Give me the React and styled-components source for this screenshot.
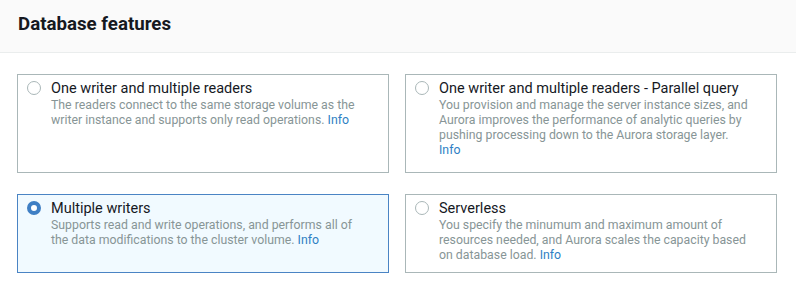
import React, { useState } from 'react';
import styled, { createGlobalStyle } from 'styled-components';

const GlobalStyle = createGlobalStyle`
  html, body {
    margin: 0;
    padding: 0;
    background: #ffffff;
    font-family: Roboto, "Noto Sans", Arial, sans-serif;
  }
`;

const Panel = styled.section`
  width: 796px;
  height: 287px;
  background: #ffffff;
  overflow: hidden;
`;

const Header = styled.header`
  height: 53px;
  box-sizing: border-box;
  padding: 0 18px;
  display: flex;
  align-items: center;
  background: #fafafa;
  border-bottom: 1px solid #eaeded;
`;

const Title = styled.h2`
  margin: 0 0 5px;
  font-size: 18.7px;
  font-weight: 700;
  color: #16191f;
`;

const Grid = styled.div`
  display: grid;
  grid-template-columns: 372px 372px;
  grid-template-rows: 99px 79px;
  column-gap: 16px;
  row-gap: 21px;
  padding: 21px 18px 0 17px;
`;

const Card = styled.label`
  display: flex;
  align-items: flex-start;
  gap: 10px;
  box-sizing: border-box;
  padding: 4px 24px 8px 9px;
  border: 1px solid ${p => (p.selected ? '#4a84c4' : '#aab7b8')};
  background: ${p => (p.selected ? '#f1faff' : '#ffffff')};
  cursor: pointer;
`;

const Radio = styled.span`
  flex: none;
  width: 14px;
  height: 14px;
  margin-top: 2px;
  box-sizing: border-box;
  border-radius: 50%;
  border: ${p => (p.checked ? '4px solid #3f7fc4' : '1px solid #aab7b8')};
  background: #ffffff;
`;

const Body = styled.div`
  display: flex;
  flex-direction: column;
`;

const OptionTitle = styled.div`
  font-size: 14.5px;
  line-height: 19px;
  color: #16191f;
`;

const Description = styled.div`
  font-size: 12.3px;
  line-height: 15px;
  color: #879596;
`;

const Info = styled.a`
  color: #2f7fc4;
  text-decoration: none;
`;

const options = [
  {
    id: 'one-writer',
    title: 'One writer and multiple readers',
    text: 'The readers connect to the same storage volume as the writer instance and supports only read operations.',
  },
  {
    id: 'parallel',
    title: 'One writer and multiple readers - Parallel query',
    text: 'You provision and manage the server instance sizes, and Aurora improves the performance of analytic queries by pushing processing down to the Aurora storage layer.',
    infoBreak: true,
  },
  {
    id: 'multi-writer',
    title: 'Multiple writers',
    text: 'Supports read and write operations, and performs all of the data modifications to the cluster volume.',
  },
  {
    id: 'serverless',
    title: 'Serverless',
    text: 'You specify the minumum and maximum amount of resources needed, and Aurora scales the capacity based on database load.',
  },
];

export default function App() {
  const [selected, setSelected] = useState('multi-writer');

  return (
    <Panel>
      <GlobalStyle />
      <Header>
        <Title>Database features</Title>
      </Header>
      <Grid>
        {options.map(opt => {
          const isOn = opt.id === selected;
          return (
            <Card key={opt.id} selected={isOn} onClick={() => setSelected(opt.id)}>
              <Radio checked={isOn} />
              <Body>
                <OptionTitle>{opt.title}</OptionTitle>
                <Description>
                  {opt.text}
                  {opt.infoBreak ? <br /> : ' '}
                  <Info href="#">Info</Info>
                </Description>
              </Body>
            </Card>
          );
        })}
      </Grid>
    </Panel>
  );
}
